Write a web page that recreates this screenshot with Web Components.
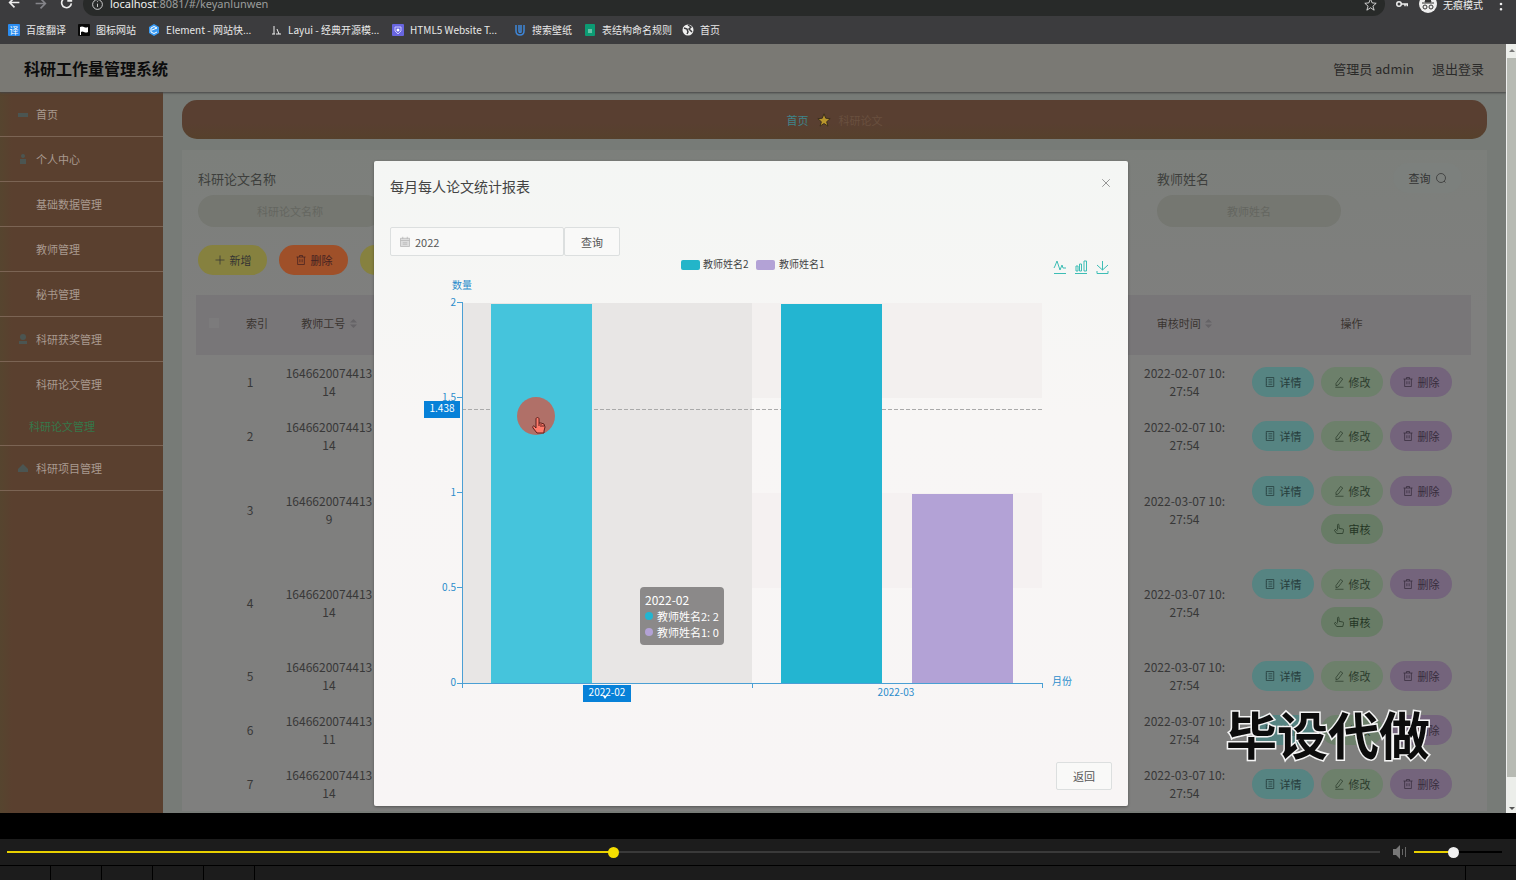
<!DOCTYPE html>
<html lang="zh-CN">
<head>
<meta charset="utf-8">
<title>科研工作量管理系统</title>
<style>
  html, body { height: 100%; }
  body {
    margin: 0;
    background: #000;
    font-family: "Noto Sans CJK SC", "Noto Sans", sans-serif;
    font-size: 12px;
    overflow: hidden;
  }
</style>
</head>
<body>
<app-screen></app-screen>

<script>
// Line icons, all drawn on a 16x16 grid
const ICONS = {
  plus: '<path d="M8 2v12M2 8h12"/>',
  trash: '<path d="M2 4h12M6 4V2h4v2M3.500 4v10h9V4M6.500 7v4M9.500 7v4"/>',
  doc: '<path d="M3 2h10v12H3zM6 5h5M6 8h5M6 11h5M3 5h1M3 8h1M3 11h1"/>',
  edit: '<path d="M10 2l3 2-6 8-3 1 0-3zM3 15h11"/>',
  thumb: '<path d="M6 9V3c0-2 2-2 2 0v4l5 1c1 0 1 1 1 2l-1 4H5L2 10c0-1 1-2 2-1l2 2"/>',
  search: '<circle cx="8" cy="8" r="6"/><path d="M12 12l2 2"/>',
  calendar: '<path fill="#ddd" d="M2 3h12v11H2zM2 6h12M5 1v3M11 1v3M5 9h6M5 11h6"/>',
  close: '<path d="M3 3l10 10M13 3L3 13"/>',
  back: '<path d="M14 8H2M8 2L2 8l6 6"/>',
  forward: '<path d="M2 8h12M8 2l6 6-6 6"/>',
  reload: '<path d="M13 5a6 6 0 1 0 1 4M14 1v5H9"/>',
  info: '<circle cx="8" cy="8" r="6"/><path d="M8 7v4M8 4v1"/>',
  star: '<path d="M8 1l2 5 5 .5-4 3.500 1.500 5L8 12l-4.500 3L5 10 1 6.500 6 6z"/>',
  key: '<circle cx="4" cy="8" r="3"/><path d="M7 8h8v3M12 8v3"/>',
  more: '<path stroke-width="3" stroke-linecap="round" d="M8 2v0M8 8v0M8 14v0"/>'
};

function icon(name, size = 12, weight = 1) {
  return `<svg width="${size}" height="${size}" viewBox="0 0 16 16" fill="none"
    stroke="currentColor" stroke-width="${weight}" aria-hidden="true">${ICONS[name]}</svg>`;
}

/**
 * Base class: puts the markup in an open shadow root
 */
class BaseElem extends HTMLElement {
  constructor() {
    super();
    this.attachShadow({ mode: 'open' });
  }

  connectedCallback() {
    const template = document.createElement('template');
    template.innerHTML = this.markup();
    this.shadowRoot.replaceChildren(template.content.cloneNode(true));
  }
}

/**
 * One bookmark: favicon slot and a label
 */
class BookmarkLink extends BaseElem {
  markup() {
    return `
    <style>
      :host { display: block; width: 70px; }
      :host([size=medium]) { width: 98px; }
      :host([size=long]) { width: 122px; }
      a {
        display: flex;
        align-items: center;
        gap: 6px;
        color: #e8e8e8;
        font-size: 10px;
        line-height: 16px;
        text-decoration: none;
        white-space: nowrap;
      }
      svg { flex: none; }
    </style>
    <a href="#"><svg width="12" height="12" viewBox="0 0 12 12" aria-hidden="true">${this.favicon()}</svg><slot></slot></a>`;
  }

  favicon() {
    return {
      translate: '<rect width="12" height="12" rx="1" fill="#2a8cf0"/><text x="6" y="10" font-size="9" text-anchor="middle" fill="#fff">译</text>',
      flag: '<rect width="12" height="12" rx="1" fill="#080808"/><path d="M2 3q2-1 4 0t4 0v5q-2 1-4 0t-3 0v3H2z" fill="#fff"/>',
      element: '<path d="M6 0l5 3v6l-5 3-5-3V3z" fill="#3a9cf5"/><path d="M9 4L6 2.500 3 4v4l3 1.500 3-1.500M4 6l5-2" stroke="#fff" fill="none"/>',
      layui: '<path d="M4 2v8M2 10h3M7 5l2 5M6 10h5" stroke="#eee" fill="none"/>',
      html: '<rect width="12" height="12" rx="1" fill="#6865df"/><path d="M3 3l6 0v4L6 10 3 7z" fill="none" stroke="#c9c6ff"/><circle cx="6" cy="6" r="1.500" fill="#fff"/>',
      wallpaper: '<path d="M2 1v6q0 4 4 4t4-4V1M5 1v6q0 2 2 1V1" fill="none" stroke="#3e86d8" stroke-width="1.500"/>',
      sheet: '<rect x="1" width="10" height="12" rx="1" fill="#0c9c74"/><path d="M4 6h4M4 8h4" stroke="#bfe8da"/>',
      globe: '<circle cx="6" cy="6" r="5.500" fill="#f0f0f0"/><path d="M2 4l3 1 1 3-1 2M6 1l3 2-2 2 3 3" stroke="#3c3c3e" fill="none" stroke-width="1.500"/>'
    }[this.getAttribute('icon')];
  }
}
customElements.define('bookmark-link', BookmarkLink);

/**
 * Browser toolbar with the address field and the bookmarks
 */
class BrowserBar extends BaseElem {
  markup() {
    return `
    <style>
      :host { display: block; flex: none; height: 44px; overflow: hidden; background: #3c3c3e; color: #eee; }
      .top { display: flex; align-items: center; height: 24px; margin-top: -8px; padding: 0 8px; }
      .nav { display: flex; gap: 13px; width: 75px; }
      .dim { color: #85858a; }
      .address {
        display: flex;
        align-items: center;
        flex: 1;
        gap: 6px;
        height: 24px;
        padding: 0 8px;
        border-radius: 12px;
        background: #282a29;
      }
      .url { flex: 1; font-family: "Noto Sans", sans-serif; font-size: 11px; line-height: 20px; color: #9b9d9c; }
      .url b { color: #f2f2f2; font-weight: 400; }
      .right { display: flex; align-items: center; gap: 11px; padding-left: 11px; }
      .mode { display: flex; align-items: center; gap: 6px; font-size: 10px; }
      nav { display: flex; padding: 6px 8px; }
    </style>
    <div class="top">
      <div class="nav">${icon('back', 13, 2)}<span class="dim">${icon('forward', 13, 2)}</span>${icon('reload', 13, 2)}</div>
      <div class="address">${icon('info', 13, 1)}
        <span class="url"><b>localhost</b>:8081/#/keyanlunwen</span>${icon('star', 13, 1)}
      </div>
      <div class="right">${icon('key', 12, 2)}
        <div class="mode">
          <svg width="18" height="18" viewBox="0 0 18 18" aria-hidden="true"><circle cx="9" cy="9" r="9" fill="#eee"/>
            <path d="M3 8h12M6 7l1-3h4l1 3z" stroke="#333" fill="#333"/><g fill="none" stroke="#333"><circle cx="6" cy="12" r="2"/><circle cx="12" cy="12" r="2"/></g></svg>
          <span>无痕模式</span>
        </div>
        ${icon('more', 14, 2)}
      </div>
    </div>
    <nav>
      <bookmark-link icon="translate">百度翻译</bookmark-link>
      <bookmark-link icon="flag">图标网站</bookmark-link>
      <bookmark-link icon="element" size="long">Element - 网站快...</bookmark-link>
      <bookmark-link icon="layui" size="long">Layui - 经典开源模...</bookmark-link>
      <bookmark-link icon="html" size="long">HTML5 Website T...</bookmark-link>
      <bookmark-link icon="wallpaper">搜索壁纸</bookmark-link>
      <bookmark-link icon="sheet" size="medium">表结构命名规则</bookmark-link>
      <bookmark-link icon="globe">首页</bookmark-link>
    </nav>`;
  }
}
customElements.define('browser-bar', BrowserBar);

/**
 * Title bar of the application
 */
class AppHeader extends BaseElem {
  markup() {
    return `
    <style>
      :host {
        display: flex;
        align-items: center;
        gap: 18px;
        height: 48px;
        padding: 0 22px 0 24px;
        background: #7a7974;
        color: #2a2a29;
        font-size: 13px;
        box-shadow: 0 1px 2px #444;
        position: relative;
      }
      h1 { flex: 1; margin: 0; font-size: 16px; color: #0c0c0c; }
      a { color: inherit; text-decoration: none; }
    </style>
    <h1>科研工作量管理系统</h1>
    <span>管理员 admin</span>
    <a href="#">退出登录</a>`;
  }
}
customElements.define('app-header', AppHeader);

class SideMenu extends BaseElem {
  markup() {
    const dots = {
      home: '<path d="M0 4h10v4H0z"/>',
      user: '<circle cx="5" cy="2" r="2"/><path d="M2 5h6v5H2z"/>',
      award: '<circle cx="5" cy="3" r="3"/><path d="M1 7h8v3H1z"/>',
      folder: '<path d="M5 1l5 5v3H0V6z"/>',
      none: ''
    };
    const items = [
      ['首页', 'home'], ['个人中心', 'user'], ['基础数据管理', 'none'], ['教师管理', 'none'],
      ['秘书管理', 'none'], ['科研获奖管理', 'award'], ['科研论文管理', 'none', '科研论文管理'], ['科研项目管理', 'folder']
    ];
    return `
    <style>
      :host {
        display: block;
        flex: none;
        width: 163px;
        background: linear-gradient(to right, #56452f, #5a402f 12px);
        font-size: 11px;
      }
      ul { margin: 0; padding: 0; list-style: none; }
      li { border-bottom: 1px solid #7b6454; }
      a {
        display: flex;
        align-items: center;
        gap: 8px;
        height: 44px;
        padding-left: 18px;
        color: #a99a90;
        text-decoration: none;
      }
      a.sub { height: 39px; padding-left: 29px; color: #35784a; }
    </style>
    <ul>${items.map(([text, dot, sub]) => `
      <li><a href="#"><svg width="10" height="10" fill="#4b5552" aria-hidden="true">${dots[dot]}</svg>${text}</a>
        ${sub ? `<a class="sub" href="#">${sub}</a>` : ''}</li>`).join('')}
    </ul>`;
  }
}
customElements.define('side-menu', SideMenu);

/**
 * Rounded button, colour by the kind attribute
 */
class PillButton extends BaseElem {
  markup() {
    return `
    <style>
      :host { display: block; width: 62px; --bg: #7c807d; --fg: #333; }
      :host([wide]) { width: 69px; }
      :host([kind=add]) { --bg: #86813f; }
      :host([kind=remove]) { --bg: #9f5029; --fg: #422; }
      :host([kind=detail]) { --bg: #568482; --fg: #263c3b; }
      :host([kind=edit]) { --bg: #6d806b; --fg: #2b3b2b; }
      :host([kind=check]) { --bg: #687c66; --fg: #243524; }
      :host([kind=delete]) { --bg: #74647c; --fg: #372c3c; }
      button {
        display: flex;
        align-items: center;
        justify-content: center;
        gap: 4px;
        width: 100%;
        height: 30px;
        border: 0;
        padding: 0;
        border-radius: 15px;
        background: var(--bg);
        color: var(--fg);
        font: inherit;
        font-size: 11px;
      }
      :host([reverse]) button { flex-direction: row-reverse; }
    </style>
    <button type="button">${this.hasAttribute('icon') ? icon(this.getAttribute('icon'), 12) : ''}<slot></slot></button>`;
  }
}
customElements.define('pill-button', PillButton);

class SearchField extends BaseElem {
  markup() {
    const label = this.getAttribute('label');
    return `
    <style>
      :host { display: block; width: 184px; }
      label { display: block; line-height: 20px; font-size: 13px; color: #3e3f3d; }
      input {
        box-sizing: border-box;
        width: 100%;
        height: 32px;
        margin-top: 6px;
        border: 0;
        border-radius: 16px;
        background: #757771;
        font: inherit;
        font-size: 11px;
        text-align: center;
      }
      input::placeholder { color: #646660; opacity: 1; }
    </style>
    <label for="q">${label}</label>
    <input id="q" type="text" placeholder="${label}">`;
  }
}
customElements.define('search-field', SearchField);

/**
 * List of papers with the action buttons of each row
 */
class PaperTable extends BaseElem {
  markup() {
    const rows = [
      ['1646620074413 14', '2022-02-07 10: 27:54'],
      ['1646620074413 14', '2022-02-07 10: 27:54'],
      ['1646620074413 9', '2022-03-07 10: 27:54', true],
      ['1646620074413 14', '2022-03-07 10: 27:54', true],
      ['1646620074413 14', '2022-03-07 10: 27:54'],
      ['1646620074413 11', '2022-03-07 10: 27:54'],
      ['1646620074413 14', '2022-03-07 10: 27:54']
    ];
    const sort = '<svg width="7" height="9" fill="#656366" aria-hidden="true"><path d="M0 3.500L3.500 0 7 3.500zM0 5.500h7L3.500 9z"/></svg>';
    return `
    <style>
      :host { display: block; }
      table { width: 100%; table-layout: fixed; border-collapse: collapse; color: #383838; line-height: 18px; }
      th { height: 56px; padding: 0 0 4px; background: #787678; font-size: 11px; font-weight: 400; color: #3a3430; }
      th svg { margin-left: 2px; }
      td { height: 54px; padding: 0 16px; text-align: center; }
      tr.tall td { height: 93px; }
      td.tight { padding: 0 2px; }
      th.index { text-align: right; }
      input { appearance: none; width: 10px; height: 10px; margin: 0; background: #7c7b7c; }
      .actions { display: flex; flex-wrap: wrap; justify-content: center; gap: 8px 7px; }
      td.ops { padding: 0 8px; }
    </style>
    <table>
      <colgroup>
        <col style="width:36px"><col style="width:36px"><col style="width:122px"><col>
        <col style="width:95px"><col style="width:239px">
      </colgroup>
      <tr>
        <th><input type="checkbox" aria-label="全选"></th>
        <th class="index">索引</th><th>教师工号 ${sort}</th><th></th><th>审核时间 ${sort}</th><th>操作</th>
      </tr>
      ${rows.map(([number, time, check], i) => `
      <tr class="${check ? 'tall' : ''}">
        <td class="tight"></td><td class="tight">${i + 1}</td><td>${number}</td><td></td><td class="tight">${time.replace(': ', ':<br>')}</td>
        <td class="ops"><div class="actions">
          <pill-button kind="detail" icon="doc">详情</pill-button>
          <pill-button kind="edit" icon="edit">修改</pill-button>
          <pill-button kind="delete" icon="trash">删除</pill-button>
          ${check ? '<pill-button kind="check" icon="thumb">审核</pill-button>' : ''}
        </div></td>
      </tr>`).join('')}
    </table>`;
  }
}
customElements.define('paper-table', PaperTable);

class PaperPage extends BaseElem {
  markup() {
    return `
    <style>
      :host { display: block; flex: 1; min-width: 0; padding: 8px 19px 0; background: #777b77; }
      .crumbs {
        display: flex;
        align-items: center;
        justify-content: center;
        gap: 8px;
        height: 39px;
        border-radius: 15px;
        background: linear-gradient(#593f31 60%, #56412c);
        color: #69503f;
        font-size: 11px;
      }
      .crumbs a { color: #3f848a; text-decoration: none; }
      .card {
        margin-top: 11px;
        padding: 19px 16px 0 14px;
        background: linear-gradient(#7c7f7b, #7f7f7e 160px);
      }
      .search { display: flex; align-items: flex-start; padding-left: 2px; }
      .search .last { margin-left: auto; margin-right: 52px; }
      .search pill-button { margin-top: -6px; margin-right: 9px; }
      .tools { display: flex; gap: 12px; padding: 18px 2px 20px; }
    </style>
    <div class="crumbs">
      <a href="#">首页</a>
      <svg width="14" height="14" viewBox="0 0 16 16" fill="#b8952c" stroke="#33291a" aria-hidden="true">${ICONS.star}</svg>
      <span>科研论文</span>
    </div>
    <div class="card">
      <div class="search">
        <search-field label="科研论文名称"></search-field>
        <search-field class="last" label="教师姓名"></search-field>
        <pill-button wide reverse icon="search">查询</pill-button>
      </div>
      <div class="tools">
        <pill-button wide kind="add" icon="plus">新增</pill-button>
        <pill-button wide kind="remove" icon="trash">删除</pill-button>
        <pill-button wide kind="add"></pill-button>
      </div>
      <paper-table></paper-table>
    </div>`;
  }
}
customElements.define('paper-page', PaperPage);

/**
 * Bar chart: papers of each teacher by month
 */
class PaperChart extends BaseElem {
  markup() {
    const top = 47, bottom = 427, left = 72, right = 652;
    const y = value => bottom - value * (bottom - top) / 2;
    const bars = [[101, 2, '#45c4dc'], [391, 2, '#23b5d1'], [522, 1, '#b3a2d6']];
    return `
    <style>
      :host { display: block; position: relative; }
      svg { display: block; width: 100%; height: 490px; font-size: 10px; }
      .axis { stroke: #4a9fd4; fill: none; shape-rendering: crispEdges; }
      .label { fill: #2b8ccb; }
      .tag { fill: #0781d8; }
      .tooltip {
        position: absolute;
        left: 250px;
        top: 331px;
        box-sizing: border-box;
        width: 84px;
        padding: 5px;
        border-radius: 4px;
        background: #8b8989;
        color: #fff;
        font-size: 11px;
        line-height: 16px;
        white-space: nowrap;
      }
      .tooltip strong { display: block; font-size: 12px; font-weight: 400; }
      .tooltip div { display: flex; align-items: center; gap: 4px; }
      .tooltip i { width: 8px; height: 8px; border-radius: 50%; background: #23b5d1; }
      .tooltip i.second { background: #b3a2d6; }
    </style>
    <svg viewBox="0 0 722 490">
      <rect x="${left}" y="${y(2)}" width="580" height="95" fill="#f3f0ef"/>
      <rect x="${left}" y="${y(1)}" width="580" height="95" fill="#f5f1f1"/>
      <rect x="${left}" y="${top}" width="290" height="380" fill="#e8e6e5"/>
      ${bars.map(([x, value, color]) => `<rect x="${x}" y="${y(value) + 1}" width="101" height="${bottom - y(value) - 1}" fill="${color}"/>`).join('')}
      <path d="M${left} 153.500H${right}" stroke="#aaa" stroke-dasharray="4 2"/>
      <rect x="101" y="152" width="101" height="3" fill="#45c4dc"/>
      <rect x="391" y="152" width="101" height="3" fill="#23b5d1"/>
      <path class="axis" d="M72.500 46V432M67 427.500H652M362.500 427v5M652.500 427v5M67 46.500h5M67 141.500h5M67 236.500h5M67 331.500h5"/>

      <g class="label" text-anchor="end">
        ${[2, 1.5, 1, 0.5, 0].map(v => `<text x="66" y="${Math.round(y(v)) + 3}">${v}</text>`).join('')}
      </g>
      <g class="label" text-anchor="middle">
        <text x="72" y="33">数量</text><text x="506" y="440">2022-03</text><text x="672" y="429">月份</text>
      </g>
      <rect class="tag" x="34" y="145" width="36" height="17"/>
      <rect class="tag" x="193" y="429" width="48" height="17"/>
      <g fill="#fff" text-anchor="middle"><text x="52" y="156">1.438</text><text x="217" y="440">2022-02</text>
        <path d="M213 440h4l-2 3z"/></g>

      <rect x="291" y="4" width="19" height="10" rx="2" fill="#23b5c9"/>
      <rect x="366" y="4" width="19" height="10" rx="2" fill="#b3a2d6"/>
      <g fill="#444"><text x="313" y="12">教师姓名2</text><text x="389" y="12">教师姓名1</text></g>

      <g fill="none" stroke="#3dbdb5">
        <path d="M664 17.500h12M664 12l1-2 2-5 3 9 2-5 1 3h3"/>
        <path d="M685 17.500h12M686 10h2v5h-2zM689.500 8h2v7h-2zM694 5h2.500v10H694z"/>
        <path d="M712.500 5v9M707 9l5.500 5 5.500-5M707 15v2.500h11V15"/>
      </g>

      <!-- pointer with its click mark -->
      <circle cx="146" cy="160" r="19" fill="#b07068"/>
      <path d="M147 177l-4-5c-1-2 1-3 2-1l1 1v-9c0-2 3-2 3 0v4h2l3 1 1 3-1 4v2z" fill="#ff7a6a" stroke="#5c1f1c"/>
      <path d="M149 167v3M151 168v3M153 169v2" stroke="#5c1f1c"/>
    </svg>
    <div class="tooltip">
      <strong>2022-02</strong>
      <div><i></i><span>教师姓名2: 2</span></div>
      <div><i class="second"></i><span>教师姓名1: 0</span></div>
    </div>`;
  }
}
customElements.define('paper-chart', PaperChart);

class ReportDialog extends BaseElem {
  markup() {
    return `
    <style>
      :host {
        display: block;
        box-sizing: border-box;
        width: 50%;
        min-width: 754px;
        padding: 12px 16px 16px;
        border-radius: 2px;
        background: linear-gradient(#f4f6f4, #f8f6f5 40%, #f8f5f5);
        box-shadow: 0 1px 3px #0005;
        color: #555;
      }
      header { display: flex; align-items: flex-start; height: 24px; }
      h2 { flex: 1; margin: 0; font-size: 14px; line-height: 26px; font-weight: 400; color: #444; }
      button { border: 1px solid #dcdfdf; border-radius: 2px; padding: 0; background: #f9f9f8; color: inherit; font: inherit; font-size: 11px; }
      header button { display: flex; border: 0; padding-top: 4px; background: none; color: #777; }
      form { display: flex; margin-top: 30px; }
      .date {
        display: flex;
        align-items: center;
        gap: 4px;
        box-sizing: border-box;
        width: 174px;
        height: 29px;
        padding: 0 8px;
        border: 1px solid #dcdfdf;
        border-radius: 2px;
        background: #f9f9f8;
      }
      .date svg { flex: none; color: #b5b5b5; }
      .date input { width: 100%; min-width: 0; border: 0; padding: 0; background: none; color: #555; font: inherit; font-size: 11px; }
      form button { width: 56px; }
      footer { display: flex; justify-content: flex-end; padding-top: 16px; }
      footer button { width: 56px; height: 28px; }
    </style>
    <header><h2>每月每人论文统计报表</h2><button type="button" aria-label="关闭">${icon('close', 12)}</button></header>
    <form>
      <label class="date">${icon('calendar', 12)}<input type="text" value="2022" aria-label="年份"></label>
      <button type="button">查询</button>
    </form>
    <paper-chart></paper-chart>
    <footer><button type="button">返回</button></footer>`;
  }
}
customElements.define('report-dialog', ReportDialog);

/**
 * Video controls: progress, volume and the cells below them
 */
class VideoPlayer extends BaseElem {
  markup() {
    return `
    <style>
      :host { display: block; flex: none; padding-top: 26px; background: #000; }
      .bar { display: flex; align-items: center; height: 26px; padding: 0 14px 0 7px; background: #1c1c1c; }
      input {
        appearance: none;
        height: 2px;
        margin: 0;
        background: linear-gradient(to right, #e8d000 44%, var(--rest) 44%);
      }
      input::-webkit-slider-thumb { appearance: none; width: 11px; height: 11px; border-radius: 50%; background: var(--thumb); }
      .progress { flex: 1; min-width: 0; --rest: #3a3a3a; --thumb: #f5de00; }
      .volume { width: 88px; --rest: #000; --thumb: #f0f0f0; }
      svg { margin: 0 7px 0 12px; }
      .cells { display: flex; height: 14px; margin-top: 1px; gap: 1px; }
      .cells span { width: 50px; background: #1c1c1c; }
      .cells .fill { flex: 1; }
    </style>
    <div class="bar">
      <input class="progress" type="range" max="1000" value="441" aria-label="进度">
      <svg width="15" height="14" viewBox="0 0 15 14" aria-hidden="true"><path d="M1 4h3l4-4v14l-4-4H1z" fill="#777"/><path d="M10.500 4v6M13.500 2v10" stroke="#666"/></svg>
      <input class="volume" type="range" max="100" value="44" aria-label="音量">
    </div>
    <div class="cells"><span></span><span></span><span></span><span></span><span></span><span class="fill"></span><span></span></div>`;
  }
}
customElements.define('video-player', VideoPlayer);

class AppScreen extends BaseElem {
  markup() {
    return `
    <style>
      :host { display: flex; flex-direction: column; height: 100vh; }
      main { display: flex; flex: 1; min-height: 0; position: relative; overflow: hidden; }
      .app { flex: 1; min-width: 0; display: flex; flex-direction: column; }
      .body { display: flex; flex: 1; min-height: 0; }
      .scroll {
        position: relative;
        box-sizing: border-box;
        width: 10px;
        padding: 14px 0 36px;
        border-left: 1px solid #eee;
        background: #eceeea;
      }
      .scroll div { height: 100%; background: #b7bab3; }
      .scroll::before, .scroll::after { content: ""; position: absolute; left: 2px; border: 3px solid transparent; }
      .scroll::before { top: 2px; border-bottom-color: #777; }
      .scroll::after { bottom: 0; border-top-color: #555; }
      .mask { position: absolute; inset: 0 14px 0 0; display: flex; justify-content: center; align-items: flex-start; padding-top: 117px; }
      .watermark {
        position: absolute;
        right: 86px;
        bottom: 48px;
        color: #0c0c0c;
        font-size: 51px;
        font-weight: 700;
        line-height: 64px;
        -webkit-text-stroke: 3px #f4f4f4;
        paint-order: stroke fill;
      }
    </style>
    <browser-bar></browser-bar>
    <main>
      <div class="app">
        <app-header></app-header>
        <div class="body"><side-menu></side-menu><paper-page></paper-page></div>
      </div>
      <div class="scroll"><div></div></div>
      <div class="mask"><report-dialog></report-dialog></div>
      <div class="watermark">毕设代做</div>
    </main>
    <video-player></video-player>`;
  }
}
customElements.define('app-screen', AppScreen);
</script>
</body>
</html>
